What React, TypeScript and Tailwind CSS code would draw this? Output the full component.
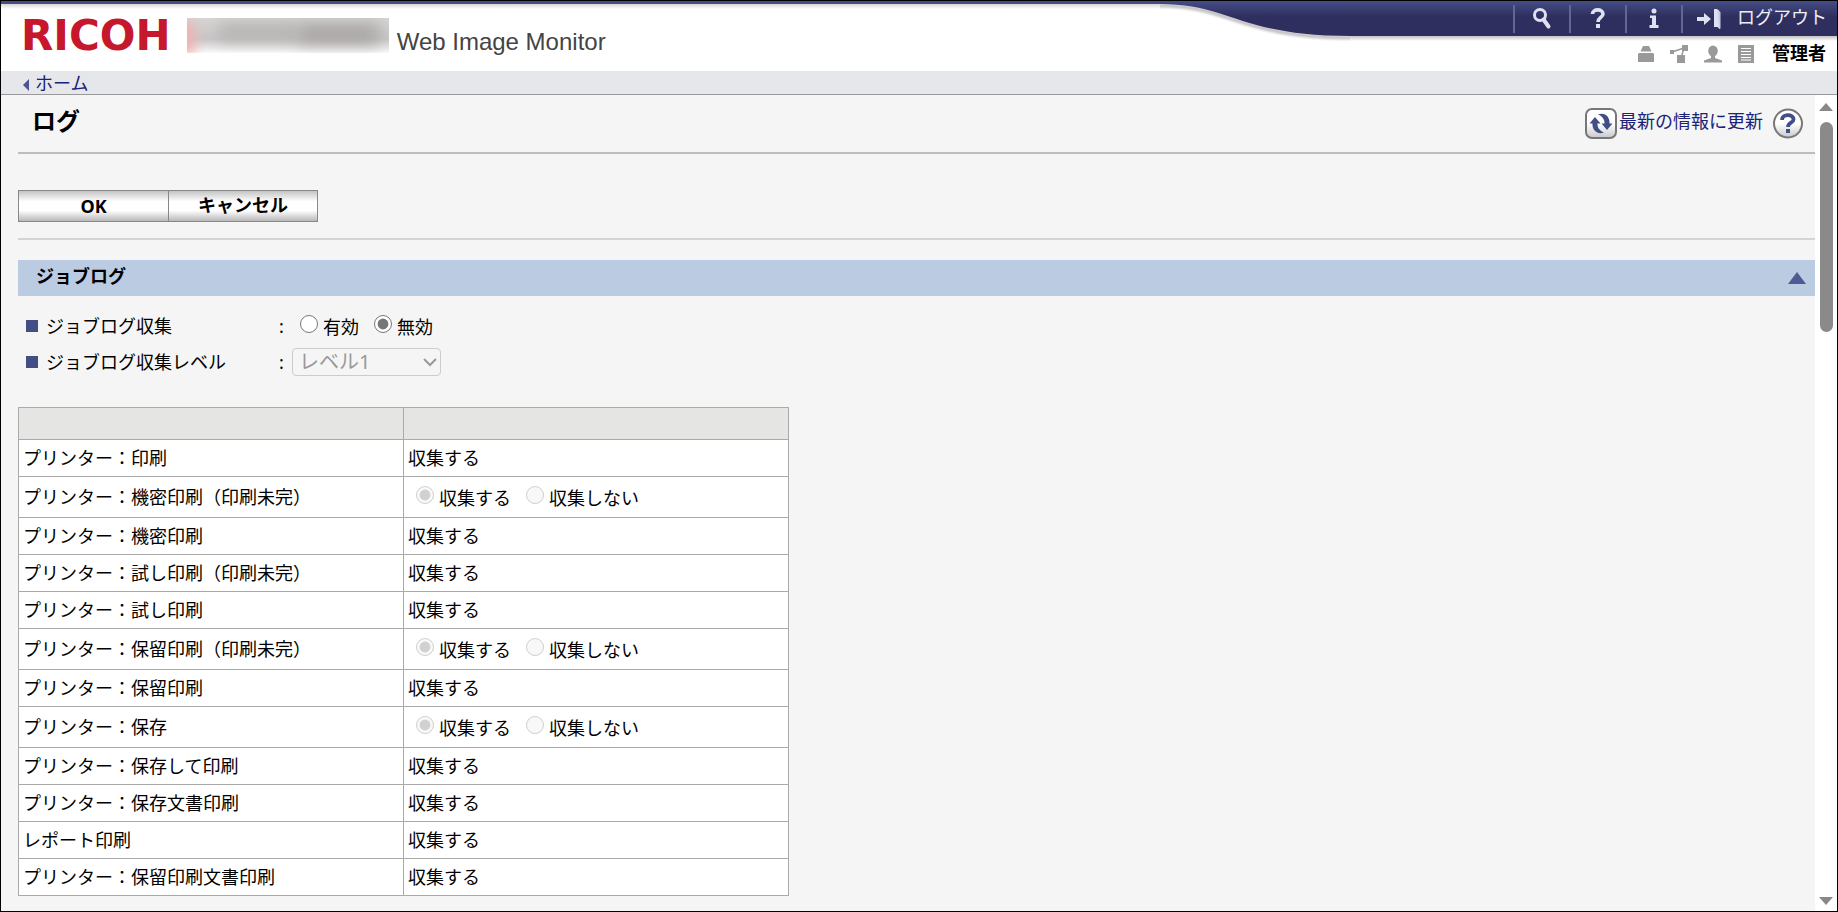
import React from "react";

type LogItem = {
  name: string;
  selectable?: boolean;
};

const logItems: LogItem[] = [
  { name: "プリンター：印刷" },
  { name: "プリンター：機密印刷（印刷未完）", selectable: true },
  { name: "プリンター：機密印刷" },
  { name: "プリンター：試し印刷（印刷未完）" },
  { name: "プリンター：試し印刷" },
  { name: "プリンター：保留印刷（印刷未完）", selectable: true },
  { name: "プリンター：保留印刷" },
  { name: "プリンター：保存", selectable: true },
  { name: "プリンター：保存して印刷" },
  { name: "プリンター：保存文書印刷" },
  { name: "レポート印刷" },
  { name: "プリンター：保留印刷文書印刷" },
];

type RadioProps = {
  name: string;
  label: string;
  checked?: boolean;
  disabled?: boolean;
};

const Radio = ({ name, label, checked, disabled }: RadioProps) => (
  <label className="flex items-center gap-[5px] pt-0.5">
    <input
      type="radio"
      name={name}
      defaultChecked={checked}
      disabled={disabled}
      className="mb-1.5 size-[18px] accent-[#767676]"
    />
    {label}
  </label>
);

const SearchIcon = () => (
  <svg width="20" height="24" viewBox="0 0 20 24" fill="none">
    <circle cx="8" cy="8" r="5.500" stroke="#dfe1f2" strokeWidth="3" />
    <path d="M11.500 12.500L16.500 19.500" stroke="#dfe1f2" strokeWidth="4" strokeLinecap="round" />
  </svg>
);

const QuestionIcon = () => (
  <svg width="18" height="24" viewBox="0 0 18 24" fill="none">
    <path
      d="M3.500 7C3.500 1.500 14 1.500 14 7C14 10.500 9 10.500 9 15"
      stroke="#dfe1f2"
      strokeWidth="3.600"
    />
    <rect x="7" y="17" width="4" height="4" fill="#dfe1f2" />
  </svg>
);

const InfoIcon = () => (
  <svg width="12" height="24" viewBox="0 0 12 24" fill="#dfe1f2">
    <circle cx="6" cy="4" r="2.500" />
    <path d="M2 8.500H8V18H10.500V21H1.500V18H4V11H2Z" />
  </svg>
);

const LogoutIcon = () => (
  <svg width="24" height="20" viewBox="0 0 24 20" fill="#dfe1f2">
    <path d="M0 8H7V4L14 10L7 16V12H0Z" />
    <path d="M17 0H20L22.500 2V20L20.500 18H17Z" />
    <path d="M20.500 2L23.500 3V19.500L22 20Z" fill="#c9cce6" />
  </svg>
);

const DeviceIcon = () => (
  <svg width="16" height="18" viewBox="0 0 16 18" fill="#999">
    <path d="M5 1H11L13.500 6.500H2.500Z" />
    <path d="M1 8H15L16 9V17H0V9Z" />
  </svg>
);

const NetworkIcon = () => (
  <svg width="18" height="18" viewBox="0 0 18 18" fill="#999">
    <path d="M2 7L14 3L11 13" stroke="#999" strokeWidth="1.500" fill="none" />
    <rect y="5" width="4" height="4" />
    <rect x="12" width="6" height="6" />
    <rect x="7" y="10" width="8" height="8" />
  </svg>
);

const UserIcon = () => (
  <svg width="18" height="18" viewBox="0 0 18 18" fill="#999">
    <ellipse cx="9" cy="6" rx="4.800" ry="5.500" />
    <path d="M7 10H11V13L18 15.500V17.500H0V15.500L7 13Z" />
  </svg>
);

const AddressIcon = () => (
  <svg width="16" height="18" viewBox="0 0 16 18">
    <rect width="16" height="18" fill="#999" />
    <path d="M3 3.500H13M3 6.500H13M3 9.500H13M3 12.500H13M3 15H13" stroke="#fff" strokeWidth="1.200" />
  </svg>
);

const RefreshIcon = () => (
  <svg width="32" height="31" viewBox="0 0 32 31">
    <defs>
      <linearGradient id="refresh-bg" x1="0" y1="0" x2="0" y2="1">
        <stop offset="0.500" stopColor="#fff" />
        <stop offset="1" stopColor="#c8c8c8" />
      </linearGradient>
    </defs>
    <rect x="1" y="1" width="30" height="29" rx="6" fill="url(#refresh-bg)" stroke="#777" strokeWidth="2" />
    <path d="M19 24.500C12 27 6.500 22 7.500 14H12.500C12 19 14 22.500 19 24.500Z" fill="#414f86" />
    <path d="M13 6.500C20 4 25.500 9 24.500 17H19.500C20 12 18 8.500 13 6.500Z" fill="#414f86" />
    <path d="M4.500 15.500L10 9L15.500 15.500Z" fill="#414f86" />
    <path d="M16.500 15.500H27.500L22 22Z" fill="#414f86" />
  </svg>
);

const HelpIcon = () => (
  <svg width="30" height="31" viewBox="0 0 30 31">
    <defs>
      <linearGradient id="help-bg" x1="0" y1="0" x2="0" y2="1">
        <stop offset="0.500" stopColor="#fff" />
        <stop offset="1" stopColor="#c8c8c8" />
      </linearGradient>
    </defs>
    <circle cx="15" cy="15.500" r="14" fill="url(#help-bg)" stroke="#777" strokeWidth="2" />
    <path d="M9 12C9 5.500 20.500 5.500 20.500 11.500C20.500 15 15 14.500 15 19" stroke="#414f86" strokeWidth="3.800" fill="none" />
    <rect x="13" y="21" width="4" height="4" fill="#414f86" />
  </svg>
);

const tools = [
  { label: "検索", icon: <SearchIcon /> },
  { label: "ヘルプ", icon: <QuestionIcon /> },
  { label: "情報", icon: <InfoIcon /> },
];

const Header = () => (
  <header className="flex h-[70px] bg-white">
    <div className="flex flex-1 items-start border-t-[3px] border-[#454d86]">
      <div className="flex h-[67px] flex-1 items-start bg-linear-to-b from-[#d9d7d9] to-white to-[5px] pl-5">
        <span className="mt-2.5 font-['DejaVu_Sans'] text-[42px] leading-[44px] font-bold text-[#c6172d]">
          RICOH
        </span>
        <div className="relative mt-3.5 ml-4 h-[35px] w-[202px] overflow-hidden bg-linear-to-b from-[#d8d5d5] via-[#c9c6c6] via-60% to-[#fbfbfb]">
          <div className="absolute top-1 -left-3 h-8 w-5 bg-[#efb4b4] blur-[6px]" />
          <div className="absolute top-1.5 left-8 h-4 w-20 bg-[#b4b0b0] blur-[8px]" />
          <div className="absolute top-1.5 left-28 h-5 w-20 bg-[#a8a4a4] blur-[8px]" />
        </div>
        <span className="mt-6 ml-2 font-['Liberation_Sans'] text-2xl leading-7 text-[#444]">
          Web Image Monitor
        </span>
      </div>
    </div>
    <svg width="190" height="70" viewBox="0 0 190 70" className="shrink-0">
      <defs>
        <linearGradient id="bar" x1="0" y1="0" x2="0" y2="1">
          <stop offset="0" stopColor="#454d86" />
          <stop offset="0.450" stopColor="#2e2f5e" />
          <stop offset="1" stopColor="#2e2f5e" />
        </linearGradient>
      </defs>
      <path
        d="M-5 4.500H0C70 4.500 80 36.500 190 36.500H195"
        stroke="#c4c2c4"
        strokeWidth="4"
        fill="none"
        className="blur-[1px]"
      />
      <path d="M0 0H190V35C80 35 70 3 0 3Z" fill="url(#bar)" />
    </svg>
    <div className="w-[487px] shrink-0">
      <nav className="flex h-[35px] items-center justify-end bg-linear-to-b from-[#454d86] via-[#2e2f5e] via-45% to-[#2e2f5e] pr-2.5 text-[#eceef8]">
        {tools.map((tool) => (
          <a
            key={tool.label}
            href="#"
            aria-label={tool.label}
            className="flex h-7 w-14 items-center justify-center border-l-2 border-[#62678f]"
          >
            {tool.icon}
          </a>
        ))}
        <a href="#" className="flex h-7 items-center gap-4 border-l-2 border-[#62678f] pl-3.5">
          <LogoutIcon />
          <span className="pb-1">ログアウト</span>
        </a>
      </nav>
      <div className="flex h-[35px] items-center justify-end bg-linear-to-b from-[#c4c2c4] to-white to-[5px] pr-[11px]">
        <div className="flex items-center gap-4 pr-[18px]">
          <DeviceIcon />
          <NetworkIcon />
          <UserIcon />
          <AddressIcon />
        </div>
        <span className="pb-0.5 font-bold text-black">管理者</span>
      </div>
    </div>
  </header>
);

const App = () => {
  return (
    <div className="flex min-h-screen flex-col border border-black bg-[#f5f5f5] font-['Noto_Sans','Noto_Sans_CJK_JP',sans-serif] text-lg leading-6 text-black">
      <Header />
      <div className="flex h-6 items-center border-b border-[#999] bg-[#e6e7eb] pl-[22px]">
        <a href="#" className="flex items-center gap-1.5 text-[#1b2378]">
          <svg width="6" height="12" viewBox="0 0 6 12" fill="#4a5596" className="mt-1">
            <path d="M6 0V12L0 6Z" />
          </svg>
          ホーム
        </a>
      </div>
      <div className="flex flex-1">
        <main className="flex-1 pb-3 pl-[17px]">
          <div className="flex h-[57px] items-center justify-between pr-3 pl-3.5">
            <h1 className="pb-1.5 text-2xl font-bold">ログ</h1>
            <div className="flex items-center gap-2.5">
              <a href="#" className="flex items-center gap-0.5 text-[#1b2378]">
                <RefreshIcon />
                <span className="pb-1.5">最新の情報に更新</span>
              </a>
              <a href="#" aria-label="ヘルプ">
                <HelpIcon />
              </a>
            </div>
          </div>
          <hr className="h-0.5 border-0 bg-[#bdbdbd]" />
          <div className="flex pt-9 pb-4">
            <button
              type="button"
              className="h-8 w-[151px] border border-[#888] bg-[linear-gradient(#c4c4c4,#fff_35%,#fff_65%,#b8b8b8)] font-bold"
            >
              OK
            </button>
            <button
              type="button"
              className="h-8 w-[149px] border border-l-0 border-[#888] bg-[linear-gradient(#c4c4c4,#fff_35%,#fff_65%,#b8b8b8)] pb-0.5 font-bold"
            >
              キャンセル
            </button>
          </div>
          <hr className="h-0.5 border-0 bg-[#d4d4d4]" />

          <div className="mt-5 flex h-9 items-center justify-between bg-[#bbcbe2] pr-[9px] pl-[18px]">
            <h2 className="pb-1 font-bold">ジョブログ</h2>
            <button type="button" aria-label="閉じる">
              <svg width="18" height="12" viewBox="0 0 18 12" fill="#4f5a94">
                <path d="M9 0L18 12H0Z" />
              </svg>
            </button>
          </div>

          <div className="pt-3 pb-[27px] pl-2">
            <div className="flex h-9 items-center">
              <span className="mr-2 size-3 bg-[#414f86]" />
              <span className="w-[233px]">ジョブログ収集</span>
              <span className="w-[13px]">:</span>
              <div className="flex gap-[15px] pl-2">
                <Radio name="job-log" label="有効" />
                <Radio name="job-log" label="無効" checked />
              </div>
            </div>
            <div className="flex h-9 items-center">
              <span className="mr-2 size-3 bg-[#414f86]" />
              <label htmlFor="level" className="w-[233px]">
                ジョブログ収集レベル
              </label>
              <span className="w-[13px]">:</span>
              <div className="relative">
                <select
                  id="level"
                  disabled
                  className="h-7 w-[149px] appearance-none rounded border border-[#ccc] pl-1.5 text-xl leading-6 text-[#999]"
                >
                  <option>レベル1</option>
                </select>
                <svg
                  width="14"
                  height="9"
                  viewBox="0 0 14 9"
                  className="pointer-events-none absolute top-2.5 right-1"
                >
                  <path d="M1 1L7 7L13 1" stroke="#999" strokeWidth="2" fill="none" />
                </svg>
              </div>
            </div>
          </div>

          <table className="w-[771px] table-fixed border-collapse bg-white">
            <thead>
              <tr className="h-8 bg-[#e5e5e3]">
                <th className="border border-[#aaa]"></th>
                <th className="border border-[#aaa]"></th>
              </tr>
            </thead>
            <tbody>
              {logItems.map((item) => (
                <tr key={item.name} className={item.selectable ? "h-[41px]" : "h-[37px]"}>
                  <td className="border border-[#aaa] px-1">{item.name}</td>
                  <td className="border border-[#aaa] px-1">
                    {item.selectable ? (
                      <div className="flex gap-[15px] pl-2">
                        <Radio name={item.name} label="収集する" checked disabled />
                        <Radio name={item.name} label="収集しない" disabled />
                      </div>
                    ) : (
                      "収集する"
                    )}
                  </td>
                </tr>
              ))}
            </tbody>
          </table>
        </main>
        {/* scroll bar */}
        <div className="flex w-[22px] flex-col items-center bg-white pt-2 pb-1.5">
          <svg width="14" height="8" viewBox="0 0 14 8" fill="#888">
            <path d="M7 0L14 8H0Z" />
          </svg>
          <div className="mt-[11px] h-[210px] w-[13px] rounded-full bg-[#8a8a8a]" />
          <svg width="14" height="8" viewBox="0 0 14 8" fill="#888" className="mt-auto">
            <path d="M0 0H14L7 8Z" />
          </svg>
        </div>
      </div>
    </div>
  );
};

export default App;
